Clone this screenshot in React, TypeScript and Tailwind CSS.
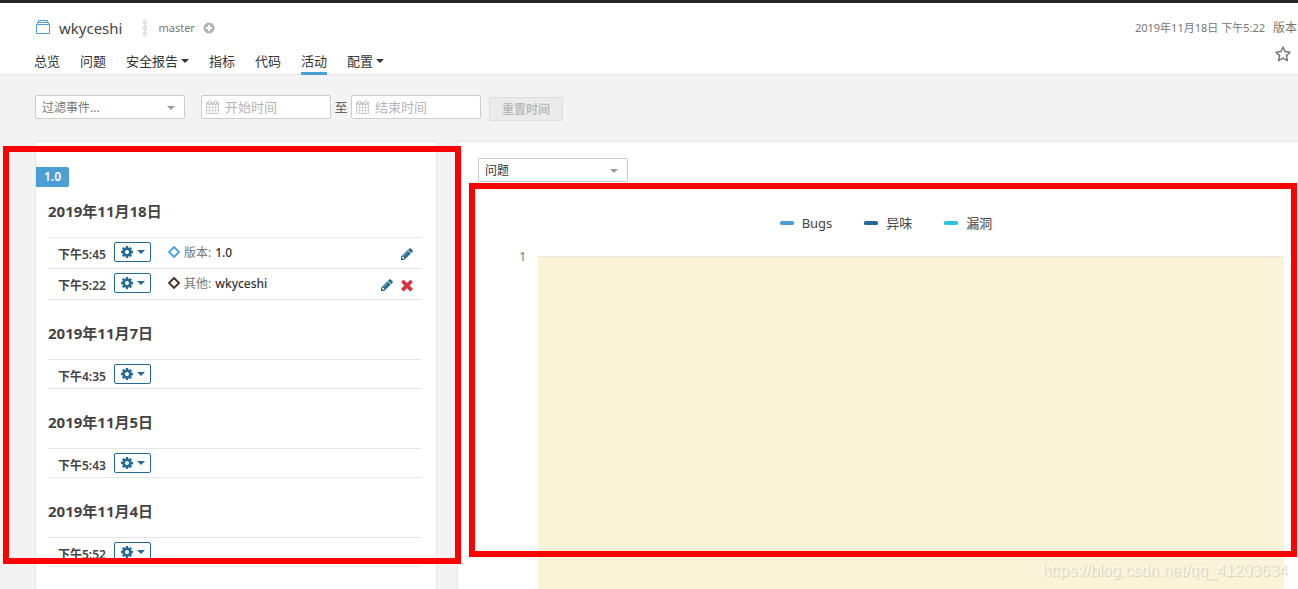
import type { ReactNode } from 'react'

interface Event {
  kind: string
  name: string
  color: string
  removable?: boolean
}

interface Analysis {
  time: string
  event?: Event
}

interface Day {
  date: string
  analyses: Analysis[]
}

const days: Day[] = [
  {
    date: '2019年11月18日',
    analyses: [
      { time: '下午5:45', event: { kind: '版本', name: '1.0', color: '#4b9fd5' } },
      { time: '下午5:22', event: { kind: '其他', name: 'wkyceshi', color: '#442d1b', removable: true } },
    ],
  },
  { date: '2019年11月7日', analyses: [{ time: '下午4:35' }] },
  { date: '2019年11月5日', analyses: [{ time: '下午5:43' }] },
  { date: '2019年11月4日', analyses: [{ time: '下午5:52' }] },
]

const tabs = [
  { label: '总览' },
  { label: '问题' },
  { label: '安全报告', menu: true },
  { label: '指标' },
  { label: '代码' },
  { label: '活动', active: true },
  { label: '配置', menu: true },
]

const series = [
  { label: 'Bugs', color: '#4b9fd5' },
  { label: '异味', color: '#236a97' },
  { label: '漏洞', color: '#24c6e0' },
]

function Caret({ className }: { className?: string }) {
  return (
    <svg viewBox="0 0 8 4" className={`h-1 w-2 shrink-0 ${className ?? ''}`} fill="currentColor" aria-hidden="true">
      <path d="M0 0h8L4 4z" />
    </svg>
  )
}

function Gear() {
  return (
    <svg viewBox="0 128 1536 1536" className="size-3" fill="currentColor" aria-hidden="true">
      <path d="M1024 896q0-106-75-181t-181-75-181 75-75 181 75 181 181 75 181-75 75-181zm512-109v222q0 12-8 23t-20 13l-185 28q-19 54-39 91 35 50 107 138 10 12 10 25t-9 23q-27 37-99 108t-94 71q-12 0-26-9l-138-108q-44 23-91 38-16 136-29 186-7 28-36 28h-222q-14 0-24.5-8.5t-11.5-21.5l-28-184q-49-16-90-37l-141 107q-10 9-25 9-14 0-25-11-126-114-165-168-7-10-7-23 0-12 8-23 15-21 51-66.500t54-70.500q-27-50-41-99l-183-27q-13-2-21-12.500t-8-23.500v-222q0-12 8-23t19-13l186-28q14-46 39-92-40-57-107-138-10-12-10-24 0-10 9-23 26-36 98.500-107.500t94.500-71.500q13 0 26 10l138 107q44-23 91-38 16-136 29-186 7-28 36-28h222q14 0 24.500 8.500t11.500 21.500l28 184q49 16 90 37l142-107q9-9 24-9 13 0 25 10 129 119 165 170 7 8 7 22 0 12-8 23-15 21-51 66.500t-54 70.500q26 50 41 98l183 28q13 2 21 12.500t8 23.500z" />
    </svg>
  )
}

function Pencil() {
  return (
    <svg viewBox="0 0 1792 1792" className="size-3.5" fill="#236a97" aria-hidden="true">
      <path d="M491 1536l91-91-235-235-91 91v107h128v128h107zm523-928q0-22-22-22-10 0-17 7l-542 542q-7 7-7 17 0 22 22 22 10 0 17-7l542-542q7-7 7-17zm-54-192l416 416-832 832h-416v-416zm683 96q0 53-37 90l-166 166-416-416 166-165q36-38 90-38 53 0 91 38l235 234q37 39 37 91z" />
    </svg>
  )
}

function Cross() {
  return (
    <svg viewBox="150 150 1492 1492" className="size-3.5" fill="#d4333f" aria-hidden="true">
      <path d="M1490 1322q0 40-28 68l-136 136q-28 28-68 28t-68-28l-294-294-294 294q-28 28-68 28t-68-28l-136-136q-28-28-28-68t28-68l294-294-294-294q-28-28-28-68t28-68l136-136q28-28 68-28t68 28l294 294 294-294q28-28 68-28t68 28l136 136q28 28 28 68t-28 68l-294 294 294 294q28 28 28 68z" />
    </svg>
  )
}

function Calendar() {
  return (
    <svg
      viewBox="0 0 13 14"
      className="pointer-events-none absolute top-[5px] left-[5px] h-3.5 w-[13px]"
      fill="none"
      stroke="#cdcdcd"
      aria-hidden="true"
    >
      <path d="M.5 3.500v10h12v-10" />
      <path d="M3.500 5v8M6.500 5v8M9.500 5v8M1 7.500h11M1 10.500h11" strokeOpacity=".75" />
      <path d="M0 2h13v3H0z" fill="#cdcdcd" stroke="none" />
      <path d="M3.500 1.500v2M9.500 1.500v2" strokeWidth="3" strokeLinecap="round" />
      <path d="M3.500 1v3M9.500 1v3" stroke="#fff" />
    </svg>
  )
}

function Select({ label, children, className }: { label: string; children: ReactNode; className: string }) {
  return (
    <div className="relative h-6 w-[150px]">
      <select
        aria-label={label}
        className={`block h-6 w-full appearance-none rounded-[2px] border border-[#cdcdcd] bg-white pt-0.5 pl-1.5 text-xs ${className}`}
      >
        {children}
      </select>
      <Caret className="pointer-events-none absolute top-[11px] right-2.5 text-[#999]" />
    </div>
  )
}

function DateInput({ label }: { label: string }) {
  return (
    <div className="relative h-6 w-[130px]">
      <input
        type="text"
        aria-label={label}
        placeholder={label}
        className="block h-6 w-full rounded-[2px] border border-[#cdcdcd] bg-white pl-[23px] text-[13px] placeholder:text-[#b4b4b4]"
      />
      <Calendar />
    </div>
  )
}

function Header() {
  return (
    <header className="flex h-[75px] justify-between border-t-[3px] border-b border-t-[#262626] border-b-[#e6e6e6] bg-white">
      <div className="flex flex-col justify-between pt-[13px] pl-[34px]">
        <div className="flex h-6 items-center">
          <svg viewBox="0 0 17 16" className="h-4 w-[17px]" fill="none" stroke="#4b9fd5" aria-hidden="true">
            <path d="M2.500 4.500h13v9h-13zM3.500 4V2.500h11V4M4.500 2V.5h9V2" />
          </svg>
          <a href="#" className="ml-2 text-[15px] text-[#444]">
            wkyceshi
          </a>
          <svg viewBox="0 0 6 16" className="ml-5 h-4 w-1.5" fill="none" stroke="#cdcdcd" aria-hidden="true">
            <circle cx="3" cy="2" r="1.500" />
            <circle cx="3" cy="8" r="1.500" />
            <circle cx="3" cy="14" r="1.500" />
            <path d="M3 3.500v3M3 9.500v3" />
          </svg>
          <span className="ml-2.5 text-[11px] text-[#777]">master</span>
          <svg viewBox="0 0 12 12" className="ml-2 size-3" aria-hidden="true">
            <circle cx="6" cy="6" r="5.500" fill="#b4b4b4" />
            <path d="M6 3v6M3 6h6" stroke="#fff" strokeWidth="2" />
          </svg>
        </div>
        <nav className="-mb-px flex gap-5 text-[13px] leading-5 text-[#333]">
          {tabs.map((tab) => (
            <a
              key={tab.label}
              href="#"
              aria-current={tab.active ? 'page' : undefined}
              className={`flex items-center gap-[3px] border-b-[3px] pb-px ${tab.active ? 'border-[#4b9fd5]' : 'border-transparent'}`}
            >
              {tab.label}
              {tab.menu && <Caret className="text-[#333]" />}
            </a>
          ))}
        </nav>
      </div>
      <div className="flex flex-col items-end pt-[15px] pr-px">
        <p className="flex h-5 items-baseline gap-2 text-[#777]">
          <span className="text-[11px] leading-5">2019年11月18日 下午5:22</span>
          <span className="text-xs leading-5">版本</span>
        </p>
        <button type="button" aria-label="收藏" className="mt-2 mr-1.5">
          <svg viewBox="0 0 16 16" className="size-4" fill="none" stroke="#777" strokeWidth="1.500" strokeLinejoin="round">
            <path d="M8 1l2.100 4.600 5 .6-3.700 3.400 1 5L8 12.100l-4.400 2.500 1-5L.9 6.200l5-.6z" />
          </svg>
        </button>
      </div>
    </header>
  )
}

function Filters() {
  return (
    <div className="flex h-[66px] pt-5 pl-[35px]">
      <Select label="过滤事件" className="text-[#777]">
        <option>过滤事件...</option>
      </Select>
      <div className="ml-4 flex">
        <DateInput label="开始时间" />
        <span className="w-5 text-center text-[13px] leading-6 text-[#666]">至</span>
        <DateInput label="结束时间" />
      </div>
      <button
        type="button"
        disabled
        className="mt-0.5 ml-2 h-6 w-[74px] rounded-[2px] border border-[#ddd] bg-[#ebebeb] pt-0.5 text-xs font-semibold text-[#bbb]"
      >
        重置时间
      </button>
    </div>
  )
}

function AnalysisRow({ time, event }: Analysis) {
  return (
    <li className="flex items-start border-b border-[#e6e6e6] py-1 pr-[7px] pl-2.5">
      <time className="h-5 w-14 text-xs leading-[26px] font-semibold text-[#444]">{time}</time>
      <button
        type="button"
        aria-label="操作"
        className="flex h-5 w-[37px] items-center justify-center gap-1 rounded-[2px] border border-[#236a97] text-[#236a97]"
      >
        <Gear />
        <Caret />
      </button>
      {event && (
        <div className="ml-4 flex h-[22px] flex-1 items-start text-xs leading-[22px]">
          <svg viewBox="0 0 14 14" className="mt-[3px] size-3.5" fill="none" stroke={event.color} strokeWidth="1.800">
            <path d="M7 2l5 5-5 5-5-5z" />
          </svg>
          <span className="ml-[3px] text-[#777]">{event.kind}:</span>
          <span className="ml-1 font-medium text-[#333]">{event.name}</span>
          <div className="mt-[5px] ml-auto flex gap-1.5">
            <button type="button" aria-label="编辑">
              <Pencil />
            </button>
            {event.removable && (
              <button type="button" aria-label="删除">
                <Cross />
              </button>
            )}
          </div>
        </div>
      )}
    </li>
  )
}

function Timeline() {
  return (
    <section className="w-[402px] shrink-0 rounded-t-[2px] border border-b-0 border-[#e6e6e6] bg-white pt-[25px]">
      <span className="mb-[13px] block h-5 w-[33px] rounded-r-[2px] bg-[#4b9fd5] text-center text-xs leading-5 font-semibold text-white">
        1.0
      </span>
      <div className="flex flex-col gap-[22px] pr-[15px] pl-3">
        {days.map((day) => (
          <div key={day.date}>
            <h2 className="mb-[15px] text-[15px] leading-[22px] font-bold text-[#444]">{day.date}</h2>
            <ul className="border-t border-[#e6e6e6]">
              {day.analyses.map((a) => (
                <AnalysisRow key={a.time} {...a} />
              ))}
            </ul>
          </div>
        ))}
      </div>
    </section>
  )
}

function Graph() {
  return (
    <section className="flex min-w-0 flex-1 flex-col rounded-tl-[2px] border-t border-l border-[#e6e6e6] bg-white pt-4 pl-5">
      <Select label="图表" className="text-[#333]">
        <option>问题</option>
      </Select>
      <ul className="mt-[31px] flex h-5 justify-center gap-8 pr-1 text-[13px] leading-5 text-[#444]">
        {series.map((s) => (
          <li key={s.label} className="flex items-center gap-2">
            <svg viewBox="0 0 14 4" className="h-1 w-3.5" aria-hidden="true">
              <rect width="14" height="4" rx="1.500" fill={s.color} />
            </svg>
            {s.label}
          </li>
        ))}
      </ul>
      <div className="mt-[23px] flex flex-1 pr-3.5">
        <span className="-mt-2 w-[60px] pr-3 text-right text-xs leading-[18px] text-[#777]">1</span>
        <div className="flex-1 border-t border-[#e6e6e6] bg-[#faf3d7]" />
      </div>
    </section>
  )
}

export default function App() {
  return (
    <div className="relative flex min-h-screen flex-col overflow-hidden bg-[#f3f3f3] font-['Noto_Sans','Noto_Sans_CJK_SC',sans-serif]">
      <Header />
      <Filters />
      <main className="flex flex-1 gap-5 pl-[35px]">
        <Timeline />
        <Graph />
      </main>

      {/* Highlight frames and watermark lie over the page */}
      <div className="pointer-events-none absolute top-[146px] left-[3px] h-[418px] w-[458px] border-6 border-[#f00]" />
      <div className="pointer-events-none absolute top-[183px] right-px left-[469px] h-[374px] border-6 border-[#f00]" />
      <p className="pointer-events-none absolute right-2.5 bottom-2 font-['Liberation_Sans',sans-serif] text-base leading-5 text-white/60 [text-shadow:1px_1px_1px_rgba(0,0,0,0.15)]">
        https://blog.csdn.net/qq_41203634
      </p>
    </div>
  )
}
